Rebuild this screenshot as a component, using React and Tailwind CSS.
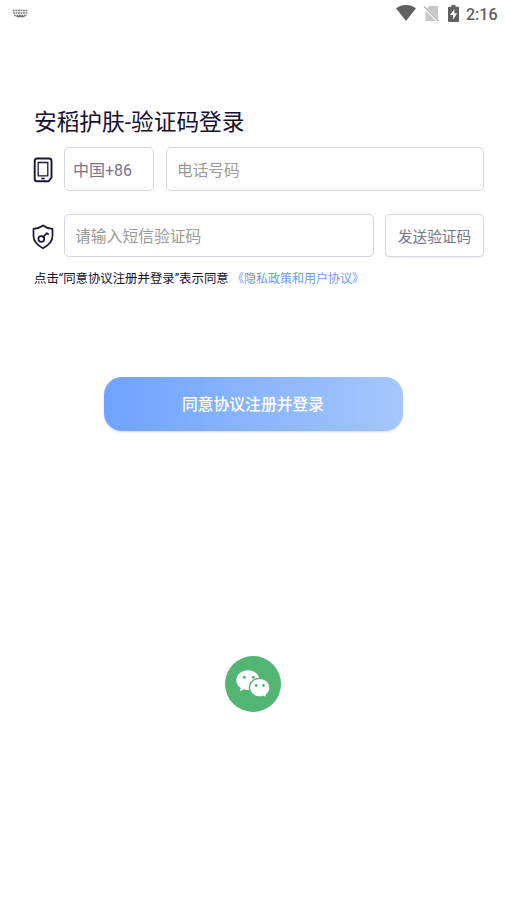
function KeyboardIcon() {
  return (
    <svg width="16" height="10" viewBox="0 0 16 10" fill="none" stroke="#777" strokeWidth="1.5">
      <path d="M1 1.5H16M1 4H16" strokeDasharray="1.8 0.7" />
      <path d="M2 6.5H15" strokeDasharray="1.8 0.7" />
      <path d="M4.5 7.5H12.5" strokeWidth="1.6" />
    </svg>
  );
}

function StatusBar() {
  return (
    <header className="flex h-7 items-center pl-3 pr-2 text-[#606060]">
      <KeyboardIcon />
      <div className="ml-auto flex items-center">
        <svg className="-mt-1" width="20" height="17" viewBox="0 0 20 17" fill="#606060">
          <path d="M10 17 0 4.300C2.700 2.200 6.200 1 10 1S17.300 2.200 20 4.300Z" />
        </svg>
        <svg className="-mt-0.5 ml-[7px]" width="17" height="17" viewBox="0 0 17 17">
          <path d="M6 1H15v13.200L4.200 3.400ZM2.500 5.500 12.800 16H2.500Z" fill="#c9c9c9" />
          <path d="M1 1.500 15.500 16" stroke="#b5b5b5" strokeWidth="1.400" />
        </svg>
        <svg className="-mt-0.5 ml-[8px]" width="11" height="17" viewBox="0 0 11 17">
          <path d="M3.500 0h4v1.700H10q1 0 1 1V16q0 1-1 1H1q-1 0-1-1V2.700q0-1 1-1h2.500Z" fill="#606060" />
          <path d="M6.500 4 2 10h3v4.500L9.200 8.300H6.300Z" fill="#fff" />
        </svg>
        <span className="mt-px ml-[7px] w-[32px] whitespace-nowrap text-[16px] leading-none font-medium">2:16</span>
      </div>
    </header>
  );
}

function PhoneIcon() {
  return (
    <svg className="mt-[2px]" width="20" height="26" viewBox="0 0 20 26" fill="none" stroke="#1b1638">
      <path d="M4 1.500H16q2.500 0 2.500 2.500V20.500L15.500 24.300H4Q1.700 24.300 1.700 22V4Q1.700 1.500 4 1.500Z" strokeWidth="1.900" />
      <path d="M5.200 5.500h9.600v13.300H5.200Z" strokeWidth="1.300" />
      <path d="M8.300 21.500h3.400" strokeWidth="1.600" />
    </svg>
  );
}

function ShieldIcon() {
  return (
    <svg className="mt-[2px]" width="22" height="26" viewBox="0 0 22 26" fill="none" stroke="#1b1638" strokeWidth="1.700" strokeLinejoin="round">
      <path d="M11 1.500C8.500 3.500 5 4.600 1.500 4.900V12c0 5.500 4 9.300 9.500 12.300 5.500-3 9.500-6.800 9.500-12.300V4.900C17 4.600 13.500 3.500 11 1.500Z" />
      <circle cx="9.300" cy="15" r="2.900" />
      <path d="m11.300 12.800 3.600-3.600 1.400.9" strokeLinecap="round" />
    </svg>
  );
}

function WechatIcon() {
  return (
    <svg width="56" height="56" viewBox="0 0 56 56">
      <circle cx="28" cy="28" r="28" fill="#52b574" />
      <path d="M23 14.200c-6.600 0-11.700 4.400-11.700 10 0 3.200 1.700 6 4.500 7.900l-.8 3.200 4-2c1.300.4 2.600.6 4 .6 6.500 0 11.700-4.300 11.700-9.700S29.500 14.200 23 14.200Z" fill="#fff" />
      <g fill="#52b574">
        <circle cx="19.400" cy="21.300" r="1.500" />
        <circle cx="28.300" cy="21.300" r="1.500" />
      </g>
      <path d="M34.700 22.300c-5.800 0-10.300 4.100-10.300 9.300s4.500 9.300 10.300 9.300c1.400 0 2.700-.2 3.800-.6l3.400 2-.8-3.300c2.400-1.700 3.900-4.300 3.900-7.400 0-5.200-4.600-9.300-10.300-9.300Z" fill="#fff" stroke="#52b574" strokeWidth="1.300" />
      <g fill="#52b574">
        <circle cx="31.200" cy="29.500" r="1.400" />
        <circle cx="38.400" cy="29.500" r="1.400" />
      </g>
    </svg>
  );
}

export default function App() {
  return (
    <div className="flex h-[900px] w-[506px] flex-col overflow-hidden bg-white font-[Roboto,'Noto_Sans_CJK_SC',sans-serif] text-[#140e30]">
      <StatusBar />

      <main className="flex flex-1 flex-col pt-[77px]">
        <h1 className="ml-[34px] h-[36px] whitespace-nowrap text-[22.700px] leading-[36px]">安稻护肤-验证码登录</h1>

        <div className="mt-[6px] flex h-[44px] items-center pr-[22px] pl-[33px]">
          <PhoneIcon />
          <button className="ml-[11px] h-full w-[90px] rounded-[5px] border border-[#d6d5e0] pt-[3px] pl-[8px] text-left text-[16px] text-[#77748a]">
            中国+86
          </button>
          <input
            className="ml-[12px] h-full w-[318px] rounded-[5px] border border-[#d6d5e0] px-[10px] pt-[2px] text-[15.700px] outline-none placeholder:text-[#999]"
            placeholder="电话号码"
          />
        </div>

        <div className="mt-[23px] flex h-[43px] items-center pr-[22px] pl-[32px]">
          <ShieldIcon />
          <input
            className="ml-[10px] h-full w-[310px] rounded-[5px] border border-[#d6d5e0] px-[10px] pt-[2px] text-[15.800px] outline-none placeholder:text-[#999]"
            placeholder="请输入短信验证码"
          />
          <button className="ml-[11px] h-full w-[99px] rounded-[4px] border border-[#d6d5e0] pt-[3px] text-[14.700px] text-[#77748a] shadow-[0_1px_1px_#0000000d]">
            发送验证码
          </button>
        </div>

        <p className="mt-[12px] ml-[34px] flex h-[20px] whitespace-nowrap text-[12.400px] leading-[20px]">
          <span className="w-[198px]">点击“同意协议注册并登录”表示同意</span>
          <a className="text-[12px] text-[#649df8]">《隐私政策和用户协议》</a>
        </p>

        <button className="mt-[88px] h-[54px] w-[299px] self-center rounded-[18px] bg-linear-to-r from-[#6fa3ff] to-[#a6c6ff] pt-[2px] text-[15.800px] font-medium text-white shadow-[0_1px_2px_#00000026]">
          同意协议注册并登录
        </button>

        <button className="mt-[225px] self-center">
          <WechatIcon />
        </button>
      </main>
    </div>
  );
}
